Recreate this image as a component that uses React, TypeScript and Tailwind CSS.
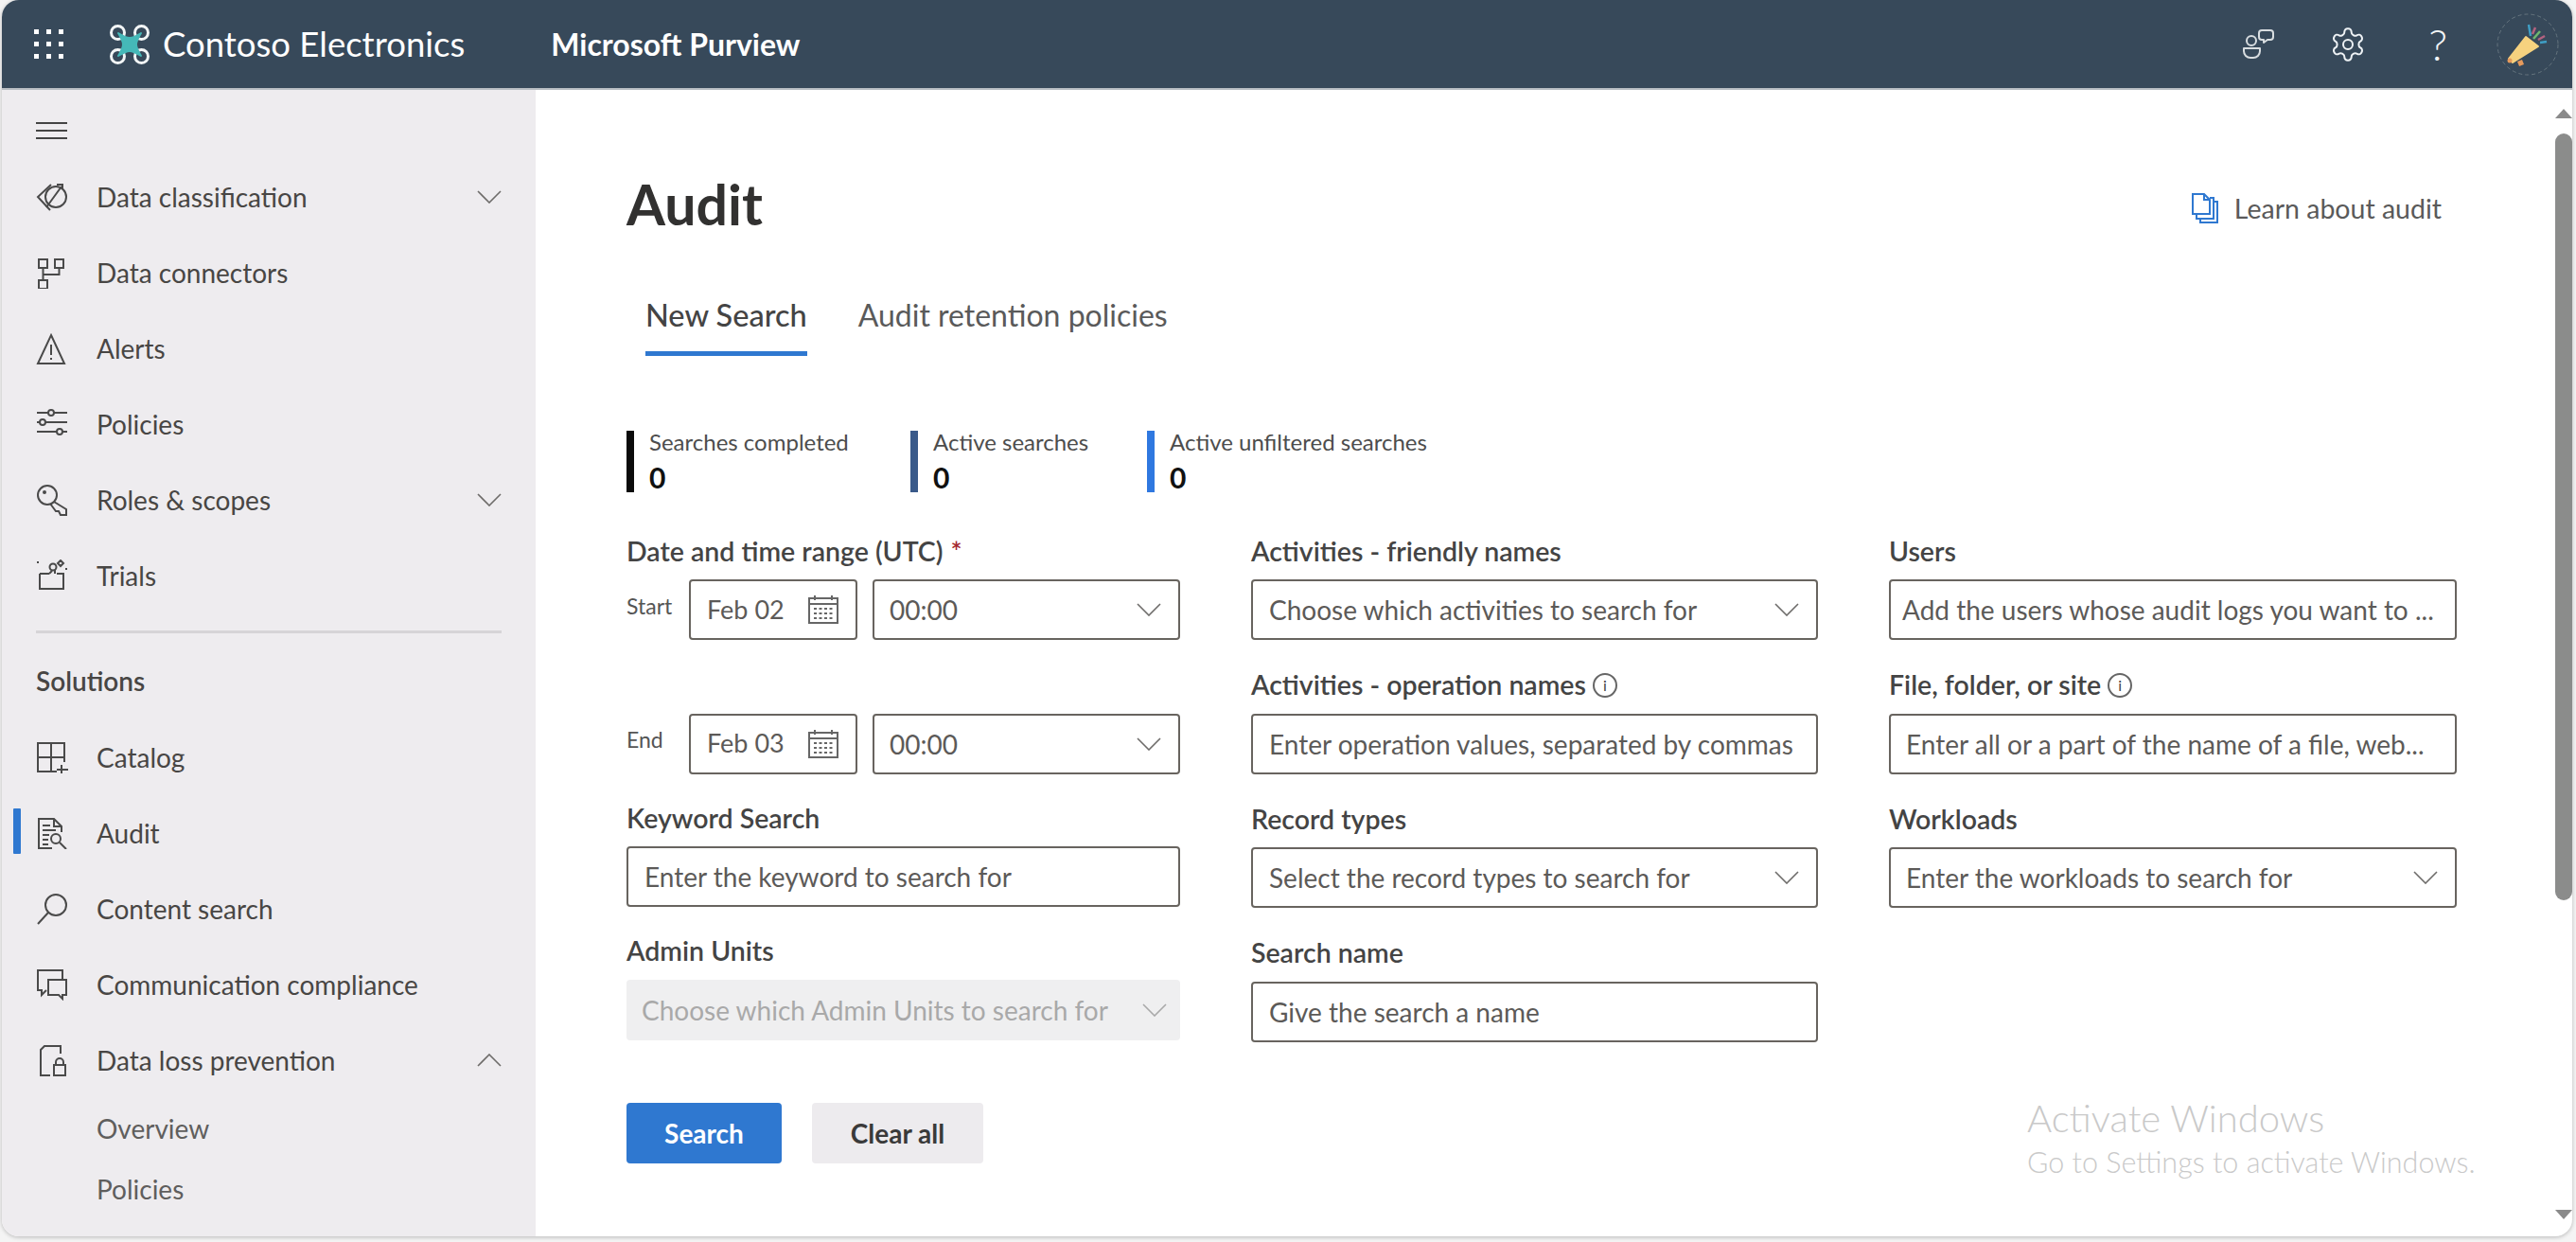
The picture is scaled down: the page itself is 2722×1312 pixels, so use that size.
import React from 'react';

const Svg = ({ children, w = 34, h = 34 }: { children: React.ReactNode; w?: number; h?: number }) => (
  <svg width={w} height={h} viewBox={`0 0 ${w} ${h}`} fill="none" stroke="currentColor" strokeWidth="2" className="shrink-0">
    {children}
  </svg>
);

const Chevron = ({ up = false, color = '#6e6c6a' }: { up?: boolean; color?: string }) => (
  <svg width="26" height="14" viewBox="0 0 26 14" fill="none" stroke={color} strokeWidth="1.600" className="shrink-0">
    <polyline points={up ? '1,13 13,1 25,13' : '1,1 13,13 25,1'} />
  </svg>
);

const icons: Record<string, React.ReactNode> = {
  tag: (
    <Svg>
      <path d="M16 4 L2 17 L15 31" />
      <circle cx="21" cy="17" r="11" />
      <path d="M27 6 L11 28 M22 4 H28 V9" />
    </Svg>
  ),
  connectors: (
    <Svg>
      <rect x="3" y="3" width="9" height="9" />
      <rect x="20" y="3" width="9" height="9" />
      <rect x="3" y="25" width="9" height="9" />
      <path d="M7.500 12 V25 M7.500 19 H24.500 V12" />
    </Svg>
  ),
  alert: (
    <Svg>
      <path d="M16 3 L30 33 H2 Z" />
      <path d="M16 13 V24 M16 27 V29" />
    </Svg>
  ),
  sliders: (
    <Svg>
      <path d="M1 5 H13 M19 5 H33 M1 15 H4 M10 15 H33 M1 25 H22 M28 25 H33" />
      <circle cx="16" cy="5" r="3" />
      <circle cx="7" cy="15" r="3" />
      <circle cx="25" cy="25" r="3" />
    </Svg>
  ),
  key: (
    <Svg>
      <circle cx="12" cy="12" r="10" />
      <circle cx="9" cy="9" r="1" />
      <path d="M19 19 L32 27 V33 H26 L24 29 H21 L18 25 L15 21" />
    </Svg>
  ),
  trials: (
    <Svg>
      <path d="M4 15 H14 M22 15 H29 V31 H4 V15" />
      <circle cx="18" cy="8" r="3.500" />
      <path d="M17 12 L14 15 M20 11 V15 M2 2 V4 M26 1 L29 4 L26 7 L23 4 Z M32 9 V11" />
    </Svg>
  ),
  catalog: (
    <Svg>
      <path d="M30 22 V2 H2 V32 H22 M2 17 H30 M16 2 V32" />
      <path d="M27 25 V35 M22 30 H34" />
    </Svg>
  ),
  audit: (
    <Svg>
      <path d="M17 33 H3 V2 H19 L27 10 V16" />
      <path d="M19 2 V10 H27 M7 9 H15 M7 14 H21 M7 19 H14 M7 24 H13 M7 29 H13" />
      <circle cx="21" cy="23" r="5" />
      <path d="M25 27 L32 34" />
    </Svg>
  ),
  search: (
    <Svg>
      <circle cx="21" cy="13" r="11" />
      <path d="M13 21 L2 33" />
    </Svg>
  ),
  chat: (
    <Svg>
      <path d="M28 11 V2 H2 V23 H6 V28 L11 23" />
      <path d="M13 12 H32 V28 H28 V32 L24 28 H13 Z" />
    </Svg>
  ),
  dlp: (
    <Svg>
      <path d="M26 10 V2 H9 L5 6 V33 H15" />
      <rect x="19" y="22" width="12" height="11" />
      <path d="M21 22 V19 A4 4 0 0 1 29 19 V22" />
    </Svg>
  ),
};

const NavItem = ({ icon, label, chevron, active }: { icon: string; label: string; chevron?: 'up' | 'down'; active?: boolean }) => (
  <div className="relative flex h-[80px] items-center pl-[36px] pr-[36px]">
    {active && <div className="absolute left-[12px] top-[14px] h-[48px] w-[8px] rounded-[1px] bg-[#2f78d0]" />}
    <div className="w-[64px] text-[#4a4a4a]">{icons[icon]}</div>
    <span className="flex-1 text-[28px] text-[#484644]">{label}</span>
    {chevron && <Chevron up={chevron === 'up'} />}
  </div>
);

const SubItem = ({ label }: { label: string }) => (
  <div className="flex h-[64px] items-center pl-[100px] text-[28px] text-[#5f5e5d]">{label}</div>
);

const Sidebar = () => (
  <aside className="w-[564px] shrink-0 overflow-hidden bg-[#eeecef]">
    <div className="flex h-[73px] items-end pl-[36px] pb-[21px]">
      <div className="flex h-[18px] w-[33px] flex-col justify-between">
        <div className="h-[2px] bg-[#444]" />
        <div className="h-[2px] bg-[#444]" />
        <div className="h-[2px] bg-[#444]" />
      </div>
    </div>
    <NavItem icon="tag" label="Data classification" chevron="down" />
    <NavItem icon="connectors" label="Data connectors" />
    <NavItem icon="alert" label="Alerts" />
    <NavItem icon="sliders" label="Policies" />
    <NavItem icon="key" label="Roles & scopes" chevron="down" />
    <NavItem icon="trials" label="Trials" />
    <div className="mx-[36px] mt-[18px] h-[3px] bg-[#d6d4d7]" />
    <div className="flex h-[72px] items-center pl-[36px] pt-[28px] text-[28px] font-semibold text-[#484644]">Solutions</div>
    <div className="h-[19px]" />
    <NavItem icon="catalog" label="Catalog" />
    <NavItem icon="audit" label="Audit" active />
    <NavItem icon="search" label="Content search" />
    <NavItem icon="chat" label="Communication compliance" />
    <NavItem icon="dlp" label="Data loss prevention" chevron="up" />
    <SubItem label="Overview" />
    <SubItem label="Policies" />
  </aside>
);

const Logo = () => (
  <svg width="44" height="44" viewBox="0 0 44 44" fill="none" className="shrink-0">
    <g stroke="#f2f5f6" strokeWidth="3">
      <circle cx="9.500" cy="9.500" r="7" />
      <circle cx="34.500" cy="9.500" r="7" />
      <circle cx="9.500" cy="34.500" r="7" />
      <circle cx="34.500" cy="34.500" r="7" />
    </g>
    <path d="M10 10 Q18 15 22 15 Q26 15 34 10 Q29 18 29 22 Q29 26 34 34 Q26 29 22 29 Q18 29 10 34 Q15 26 15 22 Q15 18 10 10 Z" fill="#45b8b8" stroke="#45b8b8" strokeWidth="2" strokeLinejoin="round" />
  </svg>
);

const Header = () => (
  <header className="flex h-[95px] shrink-0 items-center border-b-2 border-[#b9bec4] bg-[#37495a] pl-[34px] text-white">
    <div className="grid w-[31px] grid-cols-3 gap-[8px]">
      {Array.from({ length: 9 }).map((_, i) => (
        <div key={i} className="h-[5px] w-[5px] bg-white" />
      ))}
    </div>
    <div className="ml-[48px]"><Logo /></div>
    <span className="ml-[13px] text-[36.500px]">Contoso Electronics</span>
    <span className="ml-[91px] text-[32px] font-bold">Microsoft Purview</span>
    <div className="ml-auto flex items-center pr-[14px]">
      <svg width="34" height="34" viewBox="0 0 34 34" fill="none" stroke="#d8dde0" strokeWidth="2" strokeLinejoin="round">
        <circle cx="10" cy="13" r="5" />
        <path d="M2 21 H19 V24 A7 7 0 0 1 12 31 H9 A7 7 0 0 1 2 24 Z" />
        <path d="M21 2 H30 A3 3 0 0 1 33 5 V9 A3 3 0 0 1 30 12 H27 L23 15 V12 H21 A3 3 0 0 1 18 9 V5 A3 3 0 0 1 21 2 Z" />
      </svg>
      <svg className="ml-[58px]" width="40" height="40" viewBox="0 0 24 24" fill="none" stroke="#eef2f5" strokeWidth="1.200" strokeLinecap="round" strokeLinejoin="round">
        <path d="M12.220 2h-.44a2 2 0 0 0-2 2v.18a2 2 0 0 1-1 1.730l-.43.250a2 2 0 0 1-2 0l-.15-.080a2 2 0 0 0-2.730.730l-.22.380a2 2 0 0 0 .730 2.730l.15.100a2 2 0 0 1 1 1.720v.510a2 2 0 0 1-1 1.740l-.15.090a2 2 0 0 0-.730 2.730l.22.380a2 2 0 0 0 2.730.730l.15-.080a2 2 0 0 1 2 0l.43.250a2 2 0 0 1 1 1.730V20a2 2 0 0 0 2 2h.44a2 2 0 0 0 2-2v-.18a2 2 0 0 1 1-1.730l.43-.250a2 2 0 0 1 2 0l.15.080a2 2 0 0 0 2.730-.730l.22-.390a2 2 0 0 0-.730-2.730l-.15-.080a2 2 0 0 1-1-1.740v-.500a2 2 0 0 1 1-1.740l.15-.090a2 2 0 0 0 .730-2.730l-.22-.380a2 2 0 0 0-2.730-.730l-.15.080a2 2 0 0 1-2 0l-.43-.250a2 2 0 0 1-1-1.730V4a2 2 0 0 0-2-2z" />
        <circle cx="12" cy="12" r="3" />
      </svg>
      <span className="ml-[65px] text-[46px] font-light leading-none text-[#f2f5f7]">?</span>
      <svg className="ml-[52px]" width="66" height="66" viewBox="0 0 66 66" fill="none">
        <circle cx="33" cy="33" r="32" stroke="#66757f" strokeWidth="1" strokeDasharray="4 3" />
        <path d="M31 25 L44 35 L17 52 L13 48 Z" fill="#f6d27f" stroke="#f6d27f" strokeWidth="2" strokeLinejoin="round" />
        <path d="M22 51 L27 49 L29 54 L24 56 Z" fill="#e69a5c" />
        <circle cx="14" cy="50" r="2.500" fill="#e69a5c" />
        <path d="M34 12 L36 24 M53 30 L46 31" stroke="#3f9ec4" strokeWidth="2.500" />
        <path d="M41 15 L38 22 M51 24 L44 28" stroke="#b3627f" strokeWidth="2.500" />
        <path d="M46 19 L39 27" stroke="#6fb86f" strokeWidth="2.500" />
      </svg>
    </div>
  </header>
);

const Stat = ({ label, barClass, className }: { label: string; barClass: string; className: string }) => (
  <div className={`flex h-[65px] ${className}`}>
    <div className={`h-full w-[8px] ${barClass}`} />
    <div className="-mt-[2px] ml-[16px] flex flex-col">
      <span className="h-[30px] text-[24px] leading-[28px] text-[#4d4d4d]">{label}</span>
      <span className="mt-[5px] text-[30px] font-bold leading-[36px] text-[#111]">0</span>
    </div>
  </div>
);

const Field = ({ label, info, required, className = '', children }: { label?: string; info?: boolean; required?: boolean; className?: string; children: React.ReactNode }) => (
  <div className={className}>
    <div className="mb-[10px] flex h-[40px] items-center text-[28.500px] font-semibold text-[#444]">
      {label}
      {required && <span className="ml-[8px] text-[#a4262c]">*</span>}
      {info && (
        <span className="ml-[7px] flex h-[26px] w-[26px] items-center justify-center rounded-full border-2 border-[#666] text-[16px] font-normal">i</span>
      )}
    </div>
    {children}
  </div>
);

const Box = ({ text, chevron, className = '', pad = 'pl-[17px]' }: { text: string; chevron?: boolean; className?: string; pad?: string }) => (
  <div className={`flex h-[64px] items-center rounded-[4px] border-2 border-[#68645f] pr-[18px] text-[28px] text-[#5c5a58] ${pad} ${className}`}>
    <span className="flex-1 whitespace-nowrap">{text}</span>
    {chevron && <Chevron />}
  </div>
);

const Calendar = () => (
  <svg width="34" height="32" viewBox="0 0 34 32" fill="none" stroke="#666" strokeWidth="2" className="shrink-0">
    <rect x="2" y="4" width="30" height="26" />
    <path d="M2 10 H32 M8 1 V6 M26 1 V6" />
    <path d="M7 15 H28 M7 20 H28 M7 25 H28" strokeDasharray="3 2.500" />
  </svg>
);

const DateRow = ({ label, date }: { label: string; date: string }) => (
  <div className="flex items-center">
    <span className="mb-[8px] w-[66px] text-[23px] text-[#555]">{label}</span>
    <div className="flex h-[64px] w-[178px] items-center rounded-[4px] border-2 border-[#68645f] pl-[17px] pr-[17px] text-[27px] text-[#5c5a58]">
      <span className="flex-1">{date}</span>
      <Calendar />
    </div>
    <Box text="00:00" chevron pad="pl-[16px]" className="ml-[16px] flex-1" />
  </div>
);

const Form = () => (
  <div className="mt-[42px] grid grid-cols-[585px_599px_600px] gap-x-[75px] gap-y-[27.500px]">
    <Field label="Date and time range (UTC)" required><DateRow label="Start" date="Feb 02" /></Field>
    <Field label="Activities - friendly names"><Box text="Choose which activities to search for" chevron /></Field>
    <Field label="Users"><Box text="Add the users whose audit logs you want to ..." pad="pl-[12px]" /></Field>

    <Field><DateRow label="End" date="Feb 03" /></Field>
    <Field label="Activities - operation names" info><Box text="Enter operation values, separated by commas" /></Field>
    <Field label="File, folder, or site" info><Box text="Enter all or a part of the name of a file, web..." pad="pl-[16px]" /></Field>

    <Field label="Keyword Search" className="-mt-[1px]"><Box text="Enter the keyword to search for" /></Field>
    <Field label="Record types"><Box text="Select the record types to search for" chevron /></Field>
    <Field label="Workloads"><Box text="Enter the workloads to search for" chevron pad="pl-[16px]" /></Field>

    <Field label="Admin Units" className="-mt-[2px]">
      <div className="flex h-[64px] items-center rounded-[4px] bg-[#efeff0] pl-[16px] pr-[14px] text-[28px] text-[#a9a9a9]">
        <span className="flex-1 whitespace-nowrap">Choose which Admin Units to search for</span>
        <Chevron color="#a9a9a9" />
      </div>
    </Field>
    <Field label="Search name"><Box text="Give the search a name" /></Field>
  </div>
);

const Scrollbar = () => (
  <div className="flex w-[18px] shrink-0 flex-col items-center pt-[20px] pb-[18px]">
    <div className="h-0 w-0 border-x-[9px] border-b-[10px] border-x-transparent border-b-[#8a8a8a]" />
    <div className="mt-[16px] h-[810px] w-[18px] rounded-full bg-[#8b8c8b]" />
    <div className="mt-auto h-0 w-0 border-x-[9px] border-t-[10px] border-x-transparent border-t-[#8a8a8a]" />
  </div>
);

export default function App() {
  return (
    <div className="h-[1312px] w-[2722px] overflow-hidden bg-[#f4f4f4] pl-[2px] pr-[4px] pb-[6px] font-[Lato,'Liberation_Sans',sans-serif]">
      <div className="relative flex h-full flex-col overflow-hidden rounded-[18px] bg-white shadow-[0_1px_4px_rgba(0,0,0,0.25)]">
        <Header />
        <div className="flex min-h-0 flex-1">
          <Sidebar />
          <main className="min-w-0 flex-1 pl-[96px] pt-[91px]">
            <div className="flex h-[60px] items-center justify-between pr-[120px]">
              <h1 className="text-[59px] font-bold leading-[60px] text-[#323130]">Audit</h1>
              <div className="mt-[8px] flex items-center text-[28.500px] text-[#5a5a5a]">
                <svg width="28" height="32" viewBox="0 0 28 32" fill="none" stroke="#2f78d0" strokeWidth="2">
                  <path d="M1 1 H13 L19 7 V22 H1 Z" />
                  <path d="M13 1 V7 H19 M19 5 H23 V27 H5 V22 M23 9 H27 V31 H9 V27" />
                </svg>
                <span className="ml-[17px]">Learn about audit</span>
              </div>
            </div>
            <div className="mt-[64px] flex h-[66px] gap-[54px] pl-[20px] text-[32.500px] leading-[46px]">
              <div className="h-full border-b-[5px] border-[#2f78d0] font-medium text-[#444]">New Search</div>
              <div className="text-[32px] text-[#5a5a5a]">Audit retention policies</div>
            </div>
            <div className="mt-[79px] flex">
              <Stat label="Searches completed" barClass="bg-[#0b0b0b]" className="w-[300px]" />
              <Stat label="Active searches" barClass="bg-[#3a5a8a]" className="w-[250px]" />
              <Stat label="Active unfiltered searches" barClass="bg-[#2f78e0]" className="" />
            </div>
            <Form />
            <div className="mt-[64px] flex gap-[32px] text-[28px] font-bold">
              <button className="h-[64px] w-[164px] rounded-[4px] bg-[#2f78d0] text-white">Search</button>
              <button className="h-[64px] w-[181px] rounded-[4px] bg-[#edebee] text-[#3a3a3a]">Clear all</button>
            </div>
          </main>
          <Scrollbar />
        </div>
        {/* watermark sits over the page */}
        <div className="absolute left-[2140px] top-[1155px] font-light text-[#c9c9c9]">
          <div className="text-[40px] leading-[52px]">Activate Windows</div>
          <div className="text-[30.500px] leading-[40px]">Go to Settings to activate Windows.</div>
        </div>
      </div>
    </div>
  );
}
